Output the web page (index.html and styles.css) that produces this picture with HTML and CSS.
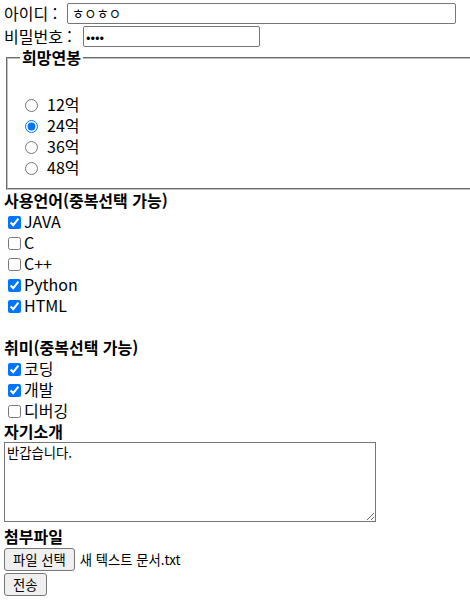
FILE: index.html
```html
<!DOCTYPE html>
<html lang="ko">
<head>
<meta charset="utf-8">
<title>회원가입</title>
<link rel="stylesheet" href="styles.css">
</head>
<body>
<form class="form">
  <div class="row row-first">
    <label class="lbl lbl-id" for="uid">아이디 :</label>
    <input class="field field-id" id="uid" type="text" value="ㅎㅇㅎㅇ">
  </div>
  <div class="row">
    <label class="lbl lbl-pw" for="upw">비밀번호 :</label>
    <input class="field field-pw" id="upw" type="password" value="1234">
  </div>

  <fieldset class="salary">
    <legend class="salary-legend">희망연봉</legend>
    <div class="blank"></div>
    <label class="opt"><input class="radio" type="radio" name="salary"><span>12억</span></label>
    <label class="opt"><input class="radio" type="radio" name="salary" checked><span>24억</span></label>
    <label class="opt"><input class="radio" type="radio" name="salary"><span>36억</span></label>
    <label class="opt"><input class="radio" type="radio" name="salary"><span>48억</span></label>
  </fieldset>

  <div class="title">사용언어(중복선택 가능)</div>
  <label class="opt"><input class="check" type="checkbox" checked><span>JAVA</span></label>
  <label class="opt"><input class="check" type="checkbox"><span>C</span></label>
  <label class="opt"><input class="check" type="checkbox"><span>C++</span></label>
  <label class="opt"><input class="check" type="checkbox" checked><span>Python</span></label>
  <label class="opt"><input class="check" type="checkbox" checked><span>HTML</span></label>
  <div class="blank"></div>

  <div class="title">취미(중복선택 가능)</div>
  <label class="opt"><input class="check" type="checkbox" checked><span>코딩</span></label>
  <label class="opt"><input class="check" type="checkbox" checked><span>개발</span></label>
  <label class="opt"><input class="check" type="checkbox"><span>디버깅</span></label>

  <div class="title">자기소개</div>
  <textarea class="intro">반갑습니다.</textarea>

  <div class="title title-file">첨부파일</div>
  <div class="file-row">
    <button class="btn" type="button">파일 선택</button>
    <span class="file-name">새 텍스트 문서.txt</span>
  </div>
  <button class="btn btn-submit" type="submit">전송</button>
</form>
</body>
</html>
```

FILE: styles.css
```css
body {
  margin: 0 0 0 4px;
  font-family: "Noto Sans CJK KR", "Noto Sans", sans-serif;
  font-size: 16px;
  line-height: 21px;
  color: #000;
  background: #fff;
}

.form {
  display: block;
}

.row {
  display: flex;
  align-items: center;
  height: 23px;
}

.row-first {
  margin-top: 2px;
}

.lbl-id {
  width: 63px;
  flex: none;
}

.lbl-pw {
  width: 79px;
  flex: none;
}

.field {
  box-sizing: border-box;
  height: 21px;
  margin: 0;
  padding: 1px 4px;
  border: 1px solid #767676;
  border-radius: 2px;
  font-family: "Noto Sans CJK KR", sans-serif;
  font-size: 13.33px;
  color: #000;
}

.field-id {
  width: 389px;
}

.field-pw {
  width: 177px;
  padding-left: 2px;
}

.salary {
  margin: -1px 0 0 2px;
  padding: 5px 12px 10px;
  border: 2px groove #c0c0c0;
  border-right: 0;
}

.salary-legend {
  padding: 0 2px;
  font-weight: bold;
  line-height: 21px;
}

.blank {
  height: 21px;
}

.opt {
  display: flex;
  align-items: center;
  height: 21px;
}

.radio {
  flex: none;
  width: 13px;
  height: 13px;
  margin: 1px 9px 0 5px;
}

.check {
  flex: none;
  width: 13px;
  height: 13px;
  margin: 1px 3px 0 4px;
}

.title {
  font-weight: bold;
  height: 21px;
}

.intro {
  display: block;
  box-sizing: border-box;
  width: 372px;
  height: 80px;
  margin: 0;
  padding: 2px;
  border: 1px solid #767676;
  border-radius: 0;
  font-family: "Noto Sans CJK KR", monospace;
  font-size: 13.33px;
  line-height: 16px;
  color: #000;
  resize: both;
}

.title-file {
  margin-top: 4px;
}

.file-row {
  display: flex;
  align-items: center;
  gap: 5px;
  margin-top: 1px;
}

.btn {
  box-sizing: border-box;
  height: 23px;
  margin: 0;
  padding: 0 8px;
  border: 1px solid #767676;
  border-radius: 3px;
  background: #efefef;
  font-family: "Noto Sans CJK KR", sans-serif;
  font-size: 13.33px;
  color: #000;
}

.file-name {
  font-size: 13.33px;
}

.btn-submit {
  display: block;
  margin-top: 2px;
}
```
